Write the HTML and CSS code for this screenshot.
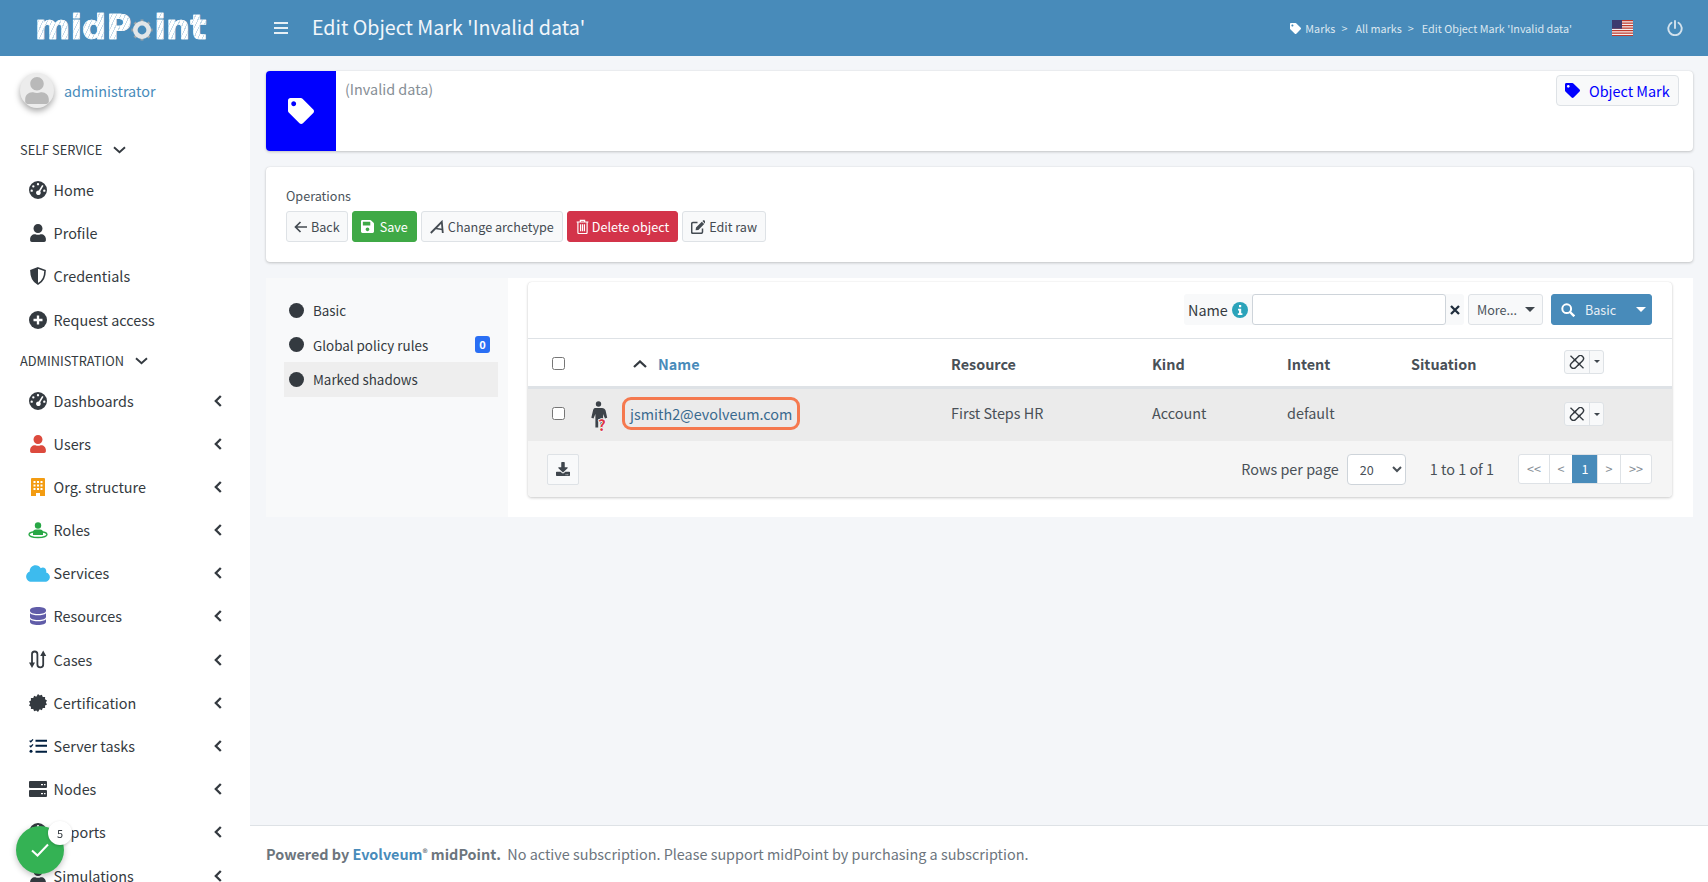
FILE: index.html
```html
<!DOCTYPE html>
<html lang="en">
<head>
<meta charset="utf-8">
<title>Edit Object Mark 'Invalid data'</title>
<link rel="stylesheet" href="styles.css">
</head>
<body>
<svg class="defs" width="0" height="0" aria-hidden="true">
  <symbol id="i-tag" viewBox="0 0 512 512"><path fill="currentColor" d="M0 252.118V48C0 21.49 21.49 0 48 0h204.118a48 48 0 0 1 33.941 14.059l211.882 211.882c18.745 18.745 18.745 49.137 0 67.882L293.823 497.941c-18.745 18.745-49.137 18.745-67.882 0L14.059 286.059A48 48 0 0 1 0 252.118zM112 64c-26.51 0-48 21.49-48 48s21.49 48 48 48 48-21.49 48-48-21.49-48-48-48z"/></symbol>
  <symbol id="i-user" viewBox="0 0 448 512"><path fill="currentColor" d="M224 256c70.7 0 128-57.3 128-128S294.7 0 224 0 96 57.3 96 128s57.3 128 128 128zm89.6 32h-16.7c-22.2 10.2-46.9 16-72.9 16s-50.6-5.8-72.9-16h-16.7C60.2 288 0 348.2 0 422.4V464c0 26.5 21.5 48 48 48h352c26.5 0 48-21.5 48-48v-41.6c0-74.2-60.2-134.4-134.4-134.4z"/></symbol>
  <symbol id="i-gauge" viewBox="0 0 20 20"><path fill="currentColor" fill-rule="evenodd" d="M10 0a10 10 0 1 0 0 20a10 10 0 0 0 0-20zM10 2.200a1.300 1.300 0 1 1 0 2.600a1.300 1.300 0 0 1 0-2.600zM4.800 4.600a1.300 1.300 0 1 1 0 2.600a1.300 1.300 0 0 1 0-2.600zM3 9.400a1.300 1.300 0 1 1 0 2.600a1.300 1.300 0 0 1 0-2.600zM17 9.400a1.300 1.300 0 1 1 0 2.600a1.300 1.300 0 0 1 0-2.600zM14.600 4.400l1.500 1l-3.600 6.100a2.600 2.600 0 1 1-1.600-1z"/></symbol>
  <symbol id="i-shield" viewBox="0 0 20 22"><path fill="none" stroke="currentColor" stroke-width="2" d="M10 1.200L18.600 4.400C18.600 11 17 17.500 10 20.800C3 17.500 1.400 11 1.400 4.400z"/><path fill="currentColor" d="M10 1.200L1.400 4.400C1.400 11 3 17.500 10 20.800z"/></symbol>
  <symbol id="i-plus" viewBox="0 0 20 20"><circle cx="10" cy="10" r="10" fill="currentColor"/><path stroke="#fff" stroke-width="2.600" d="M10 5v10M5 10h10"/></symbol>
  <symbol id="i-building" viewBox="0 0 14 18"><path fill="#f39c12" d="M1 0h12a1 1 0 0 1 1 1v17H9v-3H5v3H0V1a1 1 0 0 1 1-1z"/><path fill="#fff" d="M2.500 3h2v2h-2zM6 3h2v2H6zM9.500 3h2v2h-2zM2.500 6.500h2v2h-2zM6 6.500h2v2H6zM9.500 6.500h2v2h-2zM2.500 10h2v2h-2zM6 10h2v2H6zM9.500 10h2v2h-2z"/></symbol>
  <symbol id="i-role" viewBox="0 0 20 17"><circle cx="10" cy="3.500" r="3.200" fill="#28a745"/><path fill="#28a745" d="M5 13V10.500a3 3 0 0 1 3-3h4a3 3 0 0 1 3 3V13z"/><ellipse cx="10" cy="12.500" rx="9" ry="3" fill="none" stroke="#28a745" stroke-width="1.300"/></symbol>
  <symbol id="i-cloud" viewBox="0 0 640 512"><path fill="currentColor" d="M537.600 226.600c4.100-10.700 6.400-22.400 6.400-34.600 0-53-43-96-96-96-19.700 0-38.100 6-53.300 16.200C367 64.200 315.300 32 256 32c-88.400 0-160 71.600-160 160 0 2.700.1 5.400.2 8.100C40.200 219.800 0 273.200 0 336c0 79.500 64.500 144 144 144h368c70.700 0 128-57.300 128-128 0-61.900-44-113.600-102.400-125.400z"/></symbol>
  <symbol id="i-db" viewBox="0 0 16 18"><path fill="currentColor" d="M0 3c0-1.700 3.600-3 8-3s8 1.300 8 3v1c0 1.700-3.600 3-8 3S0 5.700 0 4zM0 6.200C1.500 7.700 4.600 8.300 8 8.300s6.500-.6 8-2.100V10c0 1.700-3.600 3-8 3s-8-1.300-8-3zM0 12.200c1.500 1.500 4.600 2.100 8 2.100s6.500-.6 8-2.100V15c0 1.700-3.600 3-8 3s-8-1.300-8-3z"/></symbol>
  <symbol id="i-cases" viewBox="0 0 18 19"><path fill="none" stroke="currentColor" stroke-width="1.800" d="M3 13V4.200a2.700 2.700 0 0 1 5.400 0v10.200a2.900 2.900 0 0 0 5.800 0V5"/><path fill="currentColor" d="M0 12.500h6l-3 5.500zM11.200 6h6l-3-5.500z"/></symbol>
  <symbol id="i-cert" viewBox="0 0 20 20"><path fill="currentColor" d="M10 0l1.900 1.800 2.400-1 1 2.400 2.600.1-.1 2.600 2.200 1.200-1.300 2.300 1.300 2.300-2.200 1.200.1 2.600-2.600.1-1 2.400-2.400-1L10 20l-1.900-1.800-2.400 1-1-2.400-2.600-.1.1-2.600L0 12.900l1.300-2.300L0 8.300l2.200-1.200-.1-2.600 2.600-.1 1-2.400 2.400 1z"/></symbol>
  <symbol id="i-tasks" viewBox="0 0 18 14"><g fill="none" stroke="currentColor"><path stroke-width="1.300" d="M.6 1.600l1.200 1.200L4 .4M.6 6.600l1.200 1.200L4 5.400"/><path stroke-width="2" d="M6.500 1.800H18M6.500 6.800H18M6.500 12.800H18"/></g><circle cx="2" cy="12.300" r="1.500" fill="currentColor"/></symbol>
  <symbol id="i-server" viewBox="0 0 18 16"><path fill="currentColor" fill-rule="evenodd" d="M1 0h16a1 1 0 0 1 1 1v5a1 1 0 0 1-1 1H1a1 1 0 0 1-1-1V1a1 1 0 0 1 1-1zM12 3v1.200h2V3zM15 3v1.200h1.500V3zM1 9h16a1 1 0 0 1 1 1v5a1 1 0 0 1-1 1H1a1 1 0 0 1-1-1v-5a1 1 0 0 1 1-1zM12 12v1.200h2V12zM15 12v1.200h1.500V12z"/></symbol>
  <symbol id="i-chev-l" viewBox="0 0 8 12"><path fill="none" stroke="currentColor" stroke-width="2.300" d="M6.800 1L1.800 6l5 5"/></symbol>
  <symbol id="i-chev-d" viewBox="0 0 13 8"><path fill="none" stroke="currentColor" stroke-width="1.900" d="M1 1.200l5.500 5 5.500-5"/></symbol>
  <symbol id="i-chev-u" viewBox="0 0 14 8"><path fill="none" stroke="currentColor" stroke-width="2.300" d="M1 7l6-5.500L13 7"/></symbol>
  <symbol id="i-back" viewBox="0 0 14 12"><path fill="none" stroke="currentColor" stroke-width="1.700" d="M6.500 1L1.500 6l5 5M1.500 6H13"/></symbol>
  <symbol id="i-save" viewBox="0 0 448 512"><path fill="currentColor" d="M433.941 129.941l-83.882-83.882A48 48 0 0 0 316.118 32H48C21.490 32 0 53.490 0 80v352c0 26.510 21.490 48 48 48h352c26.510 0 48-21.490 48-48V163.882a48 48 0 0 0-14.059-33.941zM224 416c-35.346 0-64-28.654-64-64 0-35.346 28.654-64 64-64s64 28.654 64 64c0 35.346-28.654 64-64 64zm96-304.520V212c0 6.627-5.373 12-12 12H76c-6.627 0-12-5.373-12-12V108c0-6.627 5.373-12 12-12h228.520c3.183 0 6.235 1.264 8.485 3.515l3.480 3.480A11.996 11.996 0 0 1 320 111.480z"/></symbol>
  <symbol id="i-arch" viewBox="0 0 14 14"><path fill="none" stroke="currentColor" stroke-width="1.800" d="M.8 13L11.800 1.800 12.800 13"/><path fill="none" stroke="currentColor" stroke-width="1.500" d="M6 8.500l6.500 1"/></symbol>
  <symbol id="i-trash" viewBox="0 0 12 14"><path fill="none" stroke="currentColor" stroke-width="1.100" d="M.5 2.800h11M4 2.800V1.200h4v1.600M1.700 2.800v9.800a1 1 0 0 0 1 1h6.600a1 1 0 0 0 1-1V2.800M4.200 5v6.500M6 5v6.500M7.800 5v6.500"/></symbol>
  <symbol id="i-edit" viewBox="0 0 14 14"><path fill="none" stroke="currentColor" stroke-width="1.500" d="M11.500 8.500v3.600a1.200 1.200 0 0 1-1.200 1.200H1.900a1.200 1.200 0 0 1-1.200-1.200V3.700a1.200 1.200 0 0 1 1.200-1.200h4.600"/><path fill="currentColor" d="M5 7.500L10.800 1.700l2.400 2.400L7.400 9.900l-2.800.4zM11.400 1.100l.7-.7a1 1 0 0 1 1.400 0l1 1a1 1 0 0 1 0 1.400l-.7.700z"/></symbol>
  <symbol id="i-search" viewBox="0 0 14 14"><circle cx="5.700" cy="5.700" r="4.400" fill="none" stroke="currentColor" stroke-width="2"/><path stroke="currentColor" stroke-width="2.400" d="M9 9l4.300 4.300"/></symbol>
  <symbol id="i-unlink" viewBox="0 0 16 14"><g fill="none" stroke="currentColor" stroke-width="1.400"><path d="M7 3.700L2.400 8.300a3 3 0 0 0 4.300 4.300l4.600-4.600"/><path d="M9 10.300l4.600-4.600a3 3 0 0 0-4.300-4.300L4.700 6"/><path stroke-width="1.300" d="M1.500 .8l13 12.400"/></g></symbol>
  <symbol id="i-x" viewBox="0 0 10 10"><path stroke="currentColor" stroke-width="2.300" d="M1 1l8 8M9 1l-8 8"/></symbol>
  <symbol id="i-dl" viewBox="0 0 512 512"><path fill="currentColor" d="M216 0h80c13.300 0 24 10.700 24 24v168h87.700c17.800 0 26.700 21.500 14.100 34.100L269.700 378.300c-7.500 7.500-19.800 7.500-27.300 0L90.100 226.100c-12.600-12.600-3.700-34.100 14.100-34.100H192V24c0-13.300 10.700-24 24-24zm296 376v112c0 13.300-10.700 24-24 24H24c-13.300 0-24-10.700-24-24V376c0-13.300 10.700-24 24-24h146.700l49 49c20.100 20.100 52.500 20.100 72.600 0l49-49H488c13.300 0 24 10.700 24 24zm-124 88c0-11-9-20-20-20s-20 9-20 20 9 20 20 20 20-9 20-20zm64 0c0-11-9-20-20-20s-20 9-20 20 9 20 20 20 20-9 20-20z"/></symbol>
  <symbol id="i-power" viewBox="0 0 16 16"><g fill="none" stroke="currentColor" stroke-width="1.900" stroke-linecap="round"><path d="M8 1v7"/><path d="M4.500 2.800a6.700 6.700 0 1 0 7 0"/></g></symbol>
  <symbol id="i-info" viewBox="0 0 16 16"><circle cx="8" cy="8" r="8" fill="#2ba3ba"/><path fill="#fff" d="M7 3h2.200v2.200H7zM6 6.800h3.200v4.400H10.400V13H5.800v-1.800h1.200V8.600H6z"/></symbol>
  <symbol id="i-shadow" viewBox="0 0 18 30"><circle cx="8.500" cy="3" r="2.700" fill="#3d4349"/><path fill="#3d4349" d="M5 7h7c1.900 0 3 1 3.600 2.600l1.600 7.200-2.200.6-1.900-4.400v13.500h-2.700V18H8.200v8.500H5.400V13l-1.900 4.400-2.200-.6L3 9.600C3.400 8 4 7 5 7z"/></symbol>
  <symbol id="i-flag" viewBox="0 0 21 16" preserveAspectRatio="none"><rect width="21" height="16" fill="#f4f0f0"/><path fill="#c0392b" d="M0 0h21v1.200H0zM0 2.500h21v1.200H0zM0 5h21v1.200H0zM0 7.500h21v1.200H0zM0 10h21v1.200H0zM0 12.500h21v1.200H0zM0 15h21v1H0z"/><rect width="10" height="8.700" fill="#3c3b6e"/></symbol>
  <symbol id="i-gear" viewBox="0 0 24 24"><path stroke="#9aa3a9" stroke-width="3.200" d="M12 .5v5M12 18.500v5M.5 12h5M18.500 12h5M3.900 3.900l3.500 3.500M16.600 16.600l3.500 3.500M3.900 20.100l3.500-3.500M16.600 7.400l3.500-3.500"/><circle cx="12" cy="12" r="7.300" fill="none" stroke="#e3e6e8" stroke-width="5"/></symbol>
  <symbol id="i-check" viewBox="0 0 18 14"><path fill="none" stroke="currentColor" stroke-width="2" d="M1 7.500l5.500 5L17 1.500"/></symbol>
</svg>

<header class="topbar">
  <div class="logo-cell">
    <span class="logo"><span class="logo-text">midP</span><svg class="logo-gear"><use href="#i-gear"/></svg><span class="logo-text">int</span></span>
  </div>
  <button class="burger" aria-label="Menu"><span></span><span></span><span></span></button>
  <h1 class="page-title">Edit Object Mark 'Invalid data'</h1>
  <nav class="crumbs">
    <svg class="crumb-tag"><use href="#i-tag"/></svg>
    <span>Marks</span><span class="sep">&gt;</span><span>All marks</span><span class="sep">&gt;</span><span>Edit Object Mark 'Invalid data'</span>
  </nav>
  <svg class="flag"><use href="#i-flag"/></svg>
  <svg class="power"><use href="#i-power"/></svg>
</header>

<div class="shell">
  <aside class="sidebar">
    <div class="user-panel">
      <div class="avatar"><svg class="avatar-icon"><use href="#i-user"/></svg></div>
      <span class="user-name">administrator</span>
    </div>
    <div class="menu-head">SELF SERVICE <svg class="chev-d"><use href="#i-chev-d"/></svg></div>
    <ul class="menu">
      <li><span class="mi"><svg class="ic ic-18"><use href="#i-gauge"/></svg></span><span class="ml">Home</span></li>
      <li><span class="mi"><svg class="ic ic-16"><use href="#i-user"/></svg></span><span class="ml">Profile</span></li>
      <li><span class="mi"><svg class="ic ic-18"><use href="#i-shield"/></svg></span><span class="ml">Credentials</span></li>
      <li><span class="mi"><svg class="ic ic-18"><use href="#i-plus"/></svg></span><span class="ml">Request access</span></li>
    </ul>
    <div class="menu-head menu-head-b">ADMINISTRATION <svg class="chev-d"><use href="#i-chev-d"/></svg></div>
    <ul class="menu">
      <li><span class="mi"><svg class="ic ic-18"><use href="#i-gauge"/></svg></span><span class="ml">Dashboards</span><svg class="chev-l"><use href="#i-chev-l"/></svg></li>
      <li><span class="mi c-red"><svg class="ic ic-16"><use href="#i-user"/></svg></span><span class="ml">Users</span><svg class="chev-l"><use href="#i-chev-l"/></svg></li>
      <li><span class="mi"><svg class="ic ic-building"><use href="#i-building"/></svg></span><span class="ml">Org. structure</span><svg class="chev-l"><use href="#i-chev-l"/></svg></li>
      <li><span class="mi"><svg class="ic ic-role"><use href="#i-role"/></svg></span><span class="ml">Roles</span><svg class="chev-l"><use href="#i-chev-l"/></svg></li>
      <li><span class="mi c-sky"><svg class="ic ic-cloud"><use href="#i-cloud"/></svg></span><span class="ml">Services</span><svg class="chev-l"><use href="#i-chev-l"/></svg></li>
      <li><span class="mi c-purple"><svg class="ic ic-db"><use href="#i-db"/></svg></span><span class="ml">Resources</span><svg class="chev-l"><use href="#i-chev-l"/></svg></li>
      <li><span class="mi"><svg class="ic ic-cases"><use href="#i-cases"/></svg></span><span class="ml">Cases</span><svg class="chev-l"><use href="#i-chev-l"/></svg></li>
      <li><span class="mi"><svg class="ic ic-18"><use href="#i-cert"/></svg></span><span class="ml">Certification</span><svg class="chev-l"><use href="#i-chev-l"/></svg></li>
      <li><span class="mi c-navy"><svg class="ic ic-tasks"><use href="#i-tasks"/></svg></span><span class="ml">Server tasks</span><svg class="chev-l"><use href="#i-chev-l"/></svg></li>
      <li><span class="mi"><svg class="ic ic-tasks"><use href="#i-server"/></svg></span><span class="ml">Nodes</span><svg class="chev-l"><use href="#i-chev-l"/></svg></li>
      <li><span class="mi"><svg class="ic ic-18"><use href="#i-gauge"/></svg></span><span class="ml">Reports</span><svg class="chev-l"><use href="#i-chev-l"/></svg></li>
      <li><span class="mi"><svg class="ic ic-18"><use href="#i-user"/></svg></span><span class="ml">Simulations</span><svg class="chev-l"><use href="#i-chev-l"/></svg></li>
    </ul>
  </aside>

  <main class="content">
    <div class="content-body">
      <section class="card summary">
        <div class="summary-icon"><svg class="summary-tag"><use href="#i-tag"/></svg></div>
        <div class="summary-name">(Invalid data)</div>
        <div class="type-badge"><svg class="type-tag"><use href="#i-tag"/></svg><span>Object Mark</span></div>
      </section>

      <section class="card ops">
        <div class="ops-label">Operations</div>
        <div class="ops-buttons">
          <button class="btn btn-back"><svg class="bi-14"><use href="#i-back"/></svg>Back</button>
          <button class="btn btn-green"><svg class="bi-13"><use href="#i-save"/></svg><span class="mlabel">Save</span></button>
          <button class="btn"><svg class="bi-14"><use href="#i-arch"/></svg>Change archetype</button>
          <button class="btn btn-red"><svg class="bi-13"><use href="#i-trash"/></svg>Delete object</button>
          <button class="btn"><svg class="bi-14"><use href="#i-edit"/></svg>Edit raw</button>
        </div>
      </section>

      <section class="details">
        <ul class="side-nav">
          <li><span class="dot"></span><span>Basic</span></li>
          <li><span class="dot"></span><span>Global policy rules</span><span class="pill">0</span></li>
          <li class="active"><span class="dot"></span><span>Marked shadows</span></li>
        </ul>
        <div class="details-main">
          <div class="box">
            <div class="toolbar">
              <div class="search-group">
                <span class="search-label">Name</span>
                <svg class="info"><use href="#i-info"/></svg>
                <input class="search-input" type="text">
                <svg class="clear"><use href="#i-x"/></svg>
              </div>
              <button class="more">More...<span class="caret"></span></button>
              <button class="basic"><svg class="search-ic"><use href="#i-search"/></svg><span class="basic-label">Basic</span><span class="caret caret-w"></span></button>
            </div>
            <table class="grid">
              <colgroup><col class="c1"><col class="c2"><col class="c3"><col class="c4"><col class="c5"><col class="c6"><col class="c7"><col class="c8"></colgroup>
              <thead>
                <tr>
                  <th class="cc"><input type="checkbox"></th>
                  <th></th>
                  <th class="name-th"><svg class="chev-u"><use href="#i-chev-u"/></svg><a class="sort">Name</a></th>
                  <th>Resource</th>
                  <th>Kind</th>
                  <th>Intent</th>
                  <th>Situation</th>
                  <th class="act"><span class="split"><span class="split-a"><svg class="unlink"><use href="#i-unlink"/></svg></span><span class="split-b"><span class="caret caret-s"></span></span></span></th>
                </tr>
              </thead>
              <tbody>
                <tr>
                  <td class="cc"><input type="checkbox"></td>
                  <td class="shadow-cell"><span class="shadow-wrap"><svg class="shadow-ic"><use href="#i-shadow"/></svg><span class="q">?</span></span></td>
                  <td class="link-cell"><a class="shadow-link">jsmith2@evolveum.com</a></td>
                  <td>First Steps HR</td>
                  <td>Account</td>
                  <td>default</td>
                  <td></td>
                  <td class="act"><span class="split"><span class="split-a"><svg class="unlink"><use href="#i-unlink"/></svg></span><span class="split-b"><span class="caret caret-s"></span></span></span></td>
                </tr>
              </tbody>
            </table>
            <div class="box-foot">
              <button class="export"><svg class="export-ic"><use href="#i-dl"/></svg></button>
              <span class="rows-label">Rows per page</span>
              <select class="rows-select"><option>20</option></select>
              <span class="range">1 to 1 of 1</span>
              <div class="pager">
                <a class="pg pg-first">&lt;&lt;</a><a class="pg">&lt;</a><a class="pg pg-on">1</a><a class="pg">&gt;</a><a class="pg pg-last">&gt;&gt;</a>
              </div>
            </div>
          </div>
        </div>
      </section>
    </div>
    <footer class="foot"><strong>Powered by <a class="foot-link">Evolveum</a><sup class="reg">®</sup> midPoint.</strong>&nbsp; No active subscription. Please support midPoint by purchasing a subscription.</footer>
  </main>
</div>

<div class="toast"><svg class="toast-check"><use href="#i-check"/></svg><span class="toast-count">5</span></div>
</body>
</html>
```

FILE: styles.css
```css
* { box-sizing: border-box; }
html, body { margin: 0; height: 100%; }
body {
  font-family: "Noto Sans CJK SC", "Noto Sans", sans-serif;
  font-size: 14.4px;
  line-height: 24px;
  color: #343a40;
  background: #f4f6f9;
  overflow: hidden;
  display: flex;
  flex-direction: column;
  height: 882px;
}
.defs { position: absolute; }
ul { list-style: none; margin: 0; padding: 0; }
button { font-family: inherit; }

/* top bar */
.topbar {
  flex: 0 0 56px;
  height: 56px;
  background: #488bba;
  color: #fff;
  display: flex;
  align-items: center;
}
.logo-cell { width: 274px; padding-left: 35px; flex: none; }
.logo { display: inline-flex; align-items: center; height: 32px; }
.logo-text {
  font-family: "DejaVu Sans", sans-serif;
  font-weight: 700;
  font-size: 34px;
  line-height: 32px;
  letter-spacing: 0;
  color: transparent;
  -webkit-text-stroke: .6px #fff;
  background: repeating-linear-gradient(115deg, #fff 0 3px, #c3d9e8 3px 4px);
  -webkit-background-clip: text;
  background-clip: text;
}
.logo-gear { width: 22px; height: 22px; margin: 6px 1px 0 0; flex: none; }
.burger {
  width: 14px; height: 12px; padding: 0; border: 0; background: none;
  display: flex; flex-direction: column; justify-content: space-between;
  flex: none;
}
.burger span { display: block; height: 2px; background: #e6eff5; }
.page-title {
  font-size: 19.65px;
  font-weight: 400;
  line-height: 30px;
  margin: -2px 0 0 24px;
  color: #f2f6fa;
}
.crumbs {
  margin-left: auto;
  display: flex;
  align-items: center;
  font-size: 10.8px;
  color: #dbe7f0;
}
.crumb-tag { width: 11px; height: 11px; margin-right: 4px; color: #fff; }
.sep { margin: 0 8px 0 6px; }
.flag { width: 21px; height: 16px; margin-left: 40px; }
.power { width: 16px; height: 16px; margin: 0 25px 0 34px; color: #d3e2ed; }

/* shell */
.shell { flex: 1; display: flex; min-height: 0; }
.sidebar {
  width: 250px;
  flex: none;
  background: #fff;
  overflow: hidden;
}
.user-panel {
  height: 75.6px;
  display: flex;
  align-items: flex-start;
  padding: 17px 0 0 20px;
  gap: 10px;
}
.avatar {
  width: 34px; height: 35px; border-radius: 50%;
  background: #ececec;
  box-shadow: 0 3px 6px rgba(0,0,0,.35);
  display: flex; align-items: center; justify-content: center;
  overflow: hidden;
  flex: none;
}
.avatar-icon { width: 24px; height: 27px; color: #b9b9b9; }
.user-name { color: #488bba; margin-top: 6px; }
.menu-head {
  height: 36.8px;
  padding: 1px 0 0 20px;
  font-size: 12.8px;
  display: flex;
  align-items: center;
  gap: 11px;
}
.menu-head-b { height: 37.8px; padding-top: 2px; }
.chev-d { width: 13px; height: 8px; }
.menu li {
  height: 43.2px;
  display: flex;
  align-items: center;
  padding-left: 25px;
}
.mi { width: 25px; display: flex; justify-content: center; align-items: center; flex: none; margin-right: 3.6px; }
.ml { flex: 1; }
.ic { display: block; }
.ic-18 { width: 18px; height: 18px; }
.ic-16 { width: 16px; height: 18px; }
.ic-building { width: 14px; height: 18px; }
.ic-role { width: 20px; height: 17px; }
.ic-cloud { width: 24px; height: 19px; flex: none; }
.ic-db { width: 16px; height: 18px; }
.ic-cases { width: 18px; height: 19px; }
.ic-tasks { width: 18px; height: 16px; }
.c-red { color: #dc4a3d; }
.c-sky { color: #3dbbee; }
.c-purple { color: #605ca8; }
.c-navy { color: #001f3f; }
.chev-l { width: 8px; height: 12px; margin-right: 28px; flex: none; }

/* content */
.content { flex: 1; display: flex; flex-direction: column; min-width: 0; }
.content-body { flex: 1; padding: 15px 15px 0 16px; display: flex; flex-direction: column; }
.card {
  background: #fff;
  border-radius: 4px;
  box-shadow: 0 0 1px rgba(0,0,0,.13), 0 1px 3px rgba(0,0,0,.2);
}
.summary { height: 80px; display: flex; align-items: flex-start; margin-bottom: 16px; }
.summary-icon {
  width: 70px; height: 80px;
  background: #0000ff;
  border-radius: 4px 0 0 4px;
  display: flex; align-items: center; justify-content: center;
  flex: none;
}
.summary-tag { width: 26px; height: 26px; color: #fff; }
.summary-name { margin: 6px 0 0 9px; color: #868e96; flex: 1; }
.type-badge {
  margin: 4px 14px 0 0;
  height: 31px;
  width: 123px;
  border: 1px solid #dee2e6;
  border-radius: 4px;
  background: #f8f9fa;
  color: #0000ff;
  display: flex; align-items: center;
  padding-left: 8px;
  gap: 9px;
  white-space: nowrap;
}
.type-tag { width: 15px; height: 15px; flex: none; }
.ops { height: 95px; padding: 17px 20px 0; margin-bottom: 16px; }
.ops-label { font-size: 12.6px; line-height: 24px; color: #4b545c; }
.ops-buttons { display: flex; gap: 4px; margin-top: 3px; }
.btn {
  height: 31px;
  border: 1px solid #dee2e6;
  border-radius: 3px;
  background: #f8f9fa;
  color: #444b52;
  font-size: 12.6px;
  line-height: 20px;
  padding: 0 8px;
  display: flex; align-items: center; gap: 4px;
  white-space: nowrap;
}
.btn-back { padding: 0 7px; gap: 3px; }
.btn-green { background: #3fa946; border-color: #3fa946; color: #fff; }
.mlabel { margin-left: 2px; }
.btn-red { background: #d3344a; border-color: #d3344a; color: #fff; gap: 3px; }
.bi-14 { width: 14px; height: 14px; }
.bi-13 { width: 13px; height: 15px; }

.details { height: 239px; display: flex; background: #f8f9fa; }
.side-nav { width: 242px; flex: none; padding: 15px 10px 0 18px; }
.side-nav li {
  height: 34.5px;
  display: flex; align-items: center;
  padding-left: 5px;
  font-size: 13.4px;
}
.side-nav .active { background: #eee; }
.dot { width: 15px; height: 15px; border-radius: 50%; background: #343a40; margin-right: 9px; flex: none; }
.pill {
  margin-left: auto; margin-right: 8px;
  width: 15px; height: 17px;
  background: #2a6ff4; color: #fff;
  font-size: 11px; line-height: 17px; font-weight: 700;
  text-align: center; border-radius: 3px;
}
.details-main { flex: 1; background: #fff; padding: 4px 21px 0 20px; }
.box {
  background: #fff;
  border-radius: 4px;
  height: 215px;
  box-shadow: 0 0 1px rgba(0,0,0,.13), 0 1px 3px rgba(0,0,0,.2);
  overflow: hidden;
}
.toolbar {
  height: 57px;
  border-bottom: 1px solid #dee2e6;
  display: flex; align-items: center; justify-content: flex-end;
  padding: 0 20px 1px 0;
}
.search-group {
  height: 31px; width: 280px;
  background: #f8f9fa;
  border-radius: 3px;
  display: flex; align-items: center;
  padding-left: 4px;
  margin-right: 4px;
}
.search-label { width: 39px; flex: none; }
.info { width: 16px; height: 16px; margin: 0 4px 0 5px; flex: none; }
.search-input {
  width: 194px; height: 31px;
  border: 1px solid #ced4da; border-radius: 3px;
  background: #fff; padding: 0; outline: 0;
  flex: none;
}
.clear { width: 10px; height: 10px; margin-left: 4px; color: #1f2d3d; flex: none; }
.more {
  width: 75px; height: 31px;
  background: #f8f9fa;
  border: 1px solid #dee2e6; border-radius: 3px;
  color: #4b545c; font-size: 12.6px;
  display: flex; align-items: center; padding: 0 0 0 8px;
  margin-right: 8px;
}
.caret {
  width: 0; height: 0;
  border-left: 5px solid transparent; border-right: 5px solid transparent;
  border-top: 5px solid #3f464d;
  margin-left: 8px;
}
.caret-w { border-top-color: #fff; margin-left: 20px; }
.caret-s { border-left-width: 3.5px; border-right-width: 3.5px; border-top-width: 3.5px; margin: 0; display: block; }
.basic {
  width: 101px; height: 31px;
  background: #488bba;
  border: 1px solid #488bba; border-radius: 3px;
  color: #fff; font-size: 12.6px;
  display: flex; align-items: center; padding: 0 0 0 9px;
}
.search-ic { width: 14px; height: 14px; margin-right: 10px; }
.basic-label { color: #e8f0f6; width: 31px; }

.grid { width: 1144px; table-layout: fixed; border-collapse: collapse; }
.c1 { width: 54px; } .c2 { width: 32px; } .c3 { width: 329px; } .c4 { width: 201px; }
.c5 { width: 135px; } .c6 { width: 124px; } .c7 { width: 153px; } .c8 { width: 116px; }
.grid th, .grid td { padding: 0 8px; text-align: left; vertical-align: middle; }
.grid th { padding-top: 3px; }
.grid td { padding-bottom: 3px; }
.grid input[type=checkbox] { margin: 0; display: block; width: 13px; height: 13px; }
.cc { padding-left: 24px !important; }
.grid th { height: 48px; border-bottom: 3px solid #dee2e6; font-weight: 700; color: #495057; }
.grid td { height: 54px; background: #ebebeb; color: #495057; }
.grid .act { padding-top: 0; padding-bottom: 3px; }
.name-th { padding-left: 19px !important; }
.chev-u { width: 14px; height: 8px; margin-right: 11px; vertical-align: 2px; color: #343a40; }
.sort { color: #488bba; }
.grid .shadow-cell { padding: 3px 0 0 8px; }
.shadow-wrap { position: relative; display: block; width: 18px; height: 30px; }
.shadow-ic { width: 18px; height: 30px; display: block; }
.q {
  position: absolute; left: 8px; top: 16px;
  color: #dc3545; font-weight: 700; font-size: 15px; line-height: 16px;
  text-shadow: -1px 0 #f4f4f4, 1px 0 #f4f4f4, 0 -1px #f4f4f4, 0 1px #f4f4f4;
}
.grid .link-cell { padding-left: 8px; }
.shadow-link {
  display: inline-block;
  height: 33px; line-height: 28px;
  padding: 0 5px;
  border: 3px solid #f5794f;
  border-radius: 9px;
  color: #3a6a8f;
  white-space: nowrap;
}
.split { display: inline-flex; height: 24px; border: 1px solid #dee2e6; border-radius: 3px; background: #f8f9fa; vertical-align: middle; }
.split-a { width: 24px; display: flex; align-items: center; justify-content: center; }
.split-b { width: 14px; border-left: 1px solid #dee2e6; display: flex; align-items: center; justify-content: center; }
.unlink { width: 16px; height: 14px; color: #343a40; }

.box-foot {
  height: 56px;
  background: #f5f5f5;
  display: flex; align-items: center;
  padding: 0 20px 0 19px;
}
.export {
  width: 32px; height: 31px;
  background: #f8f9fa;
  border: 1px solid #dee2e6; border-radius: 2px;
  display: flex; align-items: center; justify-content: center; padding: 0;
  margin-right: auto;
}
.export-ic { width: 14px; height: 14px; color: #3f464d; }
.rows-label { color: #495057; }
.rows-select {
  width: 59px; height: 31px; margin-left: 8px;
  background: #fff;
  border: 1px solid #ced4da; border-radius: 4px;
  color: #495057; font-size: 12.6px; font-family: inherit;
  padding-left: 8px;
}
.range { margin: 0 24px 0 24px; color: #495057; }
.pager { display: flex; height: 30px; background: #fff; border: 1px solid #dee2e6; border-radius: 3px; }
.pg {
  width: 23px; font-size: 12.6px; line-height: 28px; text-align: center; color: #868e96;
  border-left: 1px solid #dee2e6;
}
.pg:first-child { border-left: 0; }
.pg-first { width: 30px; }
.pg-last { width: 31px; }
.pg-on { width: 25px; background: #488bba; color: #fff; border-color: #488bba; }

.foot {
  flex: 0 0 57px;
  background: #fff;
  border-top: 1px solid #dee2e6;
  padding: 16px 16px 0;
  color: #6c757d;
  white-space: nowrap;
}
.foot-link { color: #488bba; }
.reg { font-size: 10px; line-height: 0; vertical-align: 3px; }

.toast {
  position: fixed;
  left: 16px; top: 826px;
  width: 48px; height: 48px;
  border-radius: 50%;
  background: #34b254;
  box-shadow: 0 2px 6px rgba(0,0,0,.25);
  display: flex; align-items: center; justify-content: center;
  color: #fff;
}
.toast-check { width: 18px; height: 14px; }
.toast-count {
  position: absolute; left: 32px; top: -5px;
  width: 24px; height: 24px; border-radius: 50%;
  background: #fff; color: #343a40;
  font-size: 11px; line-height: 24px; text-align: center;
  box-shadow: 0 1px 3px rgba(0,0,0,.2);
}
```
